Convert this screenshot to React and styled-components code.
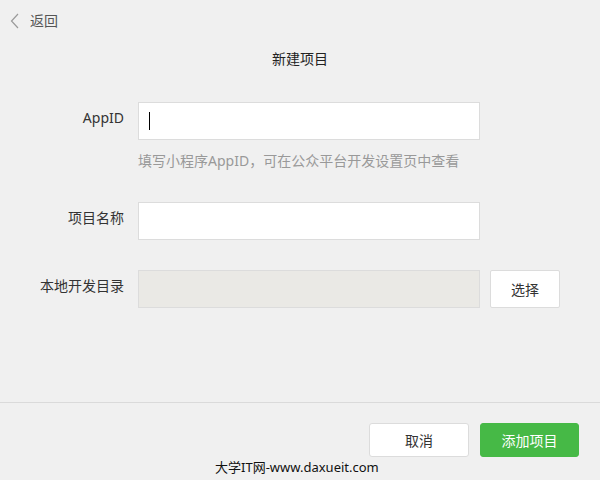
import styled, {createGlobalStyle} from "styled-components";

const GlobalStyle = createGlobalStyle`
  html, body {
    margin: 0;
    padding: 0;
    background: #f0f0f0;
  }
  body {
    font-family: "Noto Sans", "Noto Sans CJK SC", sans-serif;
    font-size: 14px;
    color: #333;
  }
`

const Page = styled.div`
  width: 600px;
  height: 480px;
  display: flex;
  flex-direction: column;
  background: #f0f0f0;
  overflow: hidden;
`

const Back = styled.a`
  display: flex;
  align-items: center;
  gap: 10px;
  margin: 12px 0 0 10px;
  height: 18px;
  line-height: 18px;
  color: #555;
  cursor: pointer;
  width: fit-content;
`

const Title = styled.h1`
  margin: 20px 0 0;
  font-size: 14px;
  font-weight: normal;
  line-height: 18px;
  text-align: center;
  color: #222;
`

const Form = styled.div`
  flex: 1;
  display: grid;
  grid-template-columns: 124px 342px 70px;
  column-gap: 14px;
  align-content: start;
  margin-top: 34px;
`

const Label = styled.label`
  grid-column: 1;
  text-align: right;
  font-size: 14px;
  line-height: 18px;
  padding-top: 7px;
  margin-top: ${p => p.$top || 0}px;
  color: #333;
  white-space: nowrap;
`

const Field = styled.div`
  grid-column: 2;
  height: 38px;
  box-sizing: border-box;
  border: 1px solid #dcdcdc;
  background: ${p => (p.$disabled ? "#eae9e5" : "#fff")};
  display: flex;
  align-items: center;
  padding-left: 10px;
  margin-top: ${p => p.$top || 0}px;
`

const Caret = styled.span`
  width: 1px;
  height: 18px;
  background: #000;
`

const Hint = styled.div`
  grid-column: 2 / 4;
  margin-top: 12px;
  line-height: 18px;
  color: #999;
  white-space: nowrap;
`

const Row = styled.div`
  display: contents;
`

const Pick = styled.button`
  grid-column: 3;
  margin: ${p => p.$top || 0}px 0 0 -4px;
  height: 38px;
  width: 70px;
  box-sizing: border-box;
  background: #fff;
  border: 1px solid #dcdcdc;
  border-radius: 2px;
  font-family: inherit;
  font-size: 14px;
  color: #333;
`

const Footer = styled.div`
  height: 78px;
  border-top: 1px solid #dadada;
  box-sizing: border-box;
  display: flex;
  flex-direction: column;
`

const Actions = styled.div`
  display: flex;
  justify-content: flex-end;
  gap: 11px;
  padding: 20px 21px 0 0;
`

const Button = styled.button`
  width: ${p => (p.$primary ? 99 : 100)}px;
  height: 34px;
  box-sizing: border-box;
  border-radius: 3px;
  font-family: inherit;
  font-size: 14px;
  border: 1px solid ${p => (p.$primary ? "#46b946" : "#dcdcdc")};
  background: ${p => (p.$primary ? "#46b946" : "#fff")};
  color: ${p => (p.$primary ? "#fff" : "#333")};
  cursor: pointer;
`

const Watermark = styled.div`
  margin: 1px 0 0 215px;
  font-size: 13px;
  line-height: 18px;
  color: #111;
  white-space: nowrap;
`

function Chevron() {
    return (
        <svg width="10" height="16" viewBox="0 0 10 16" fill="none">
            <path d="M8 1 L1.5 8 L8 15" stroke="#9a9a9a" strokeWidth="1.2"/>
        </svg>
    )
}

export default function App() {
    return (
        <Page>
            <GlobalStyle/>
            <Back><Chevron/>返回</Back>
            <Title>新建项目</Title>
            <Form>
                <Row>
                    <Label>AppID</Label>
                    <Field><Caret/></Field>
                </Row>
                <Hint>填写小程序AppID，可在公众平台开发设置页中查看</Hint>
                <Row>
                    <Label $top={32}>项目名称</Label>
                    <Field $top={32}/>
                </Row>
                <Row>
                    <Label $top={30}>本地开发目录</Label>
                    <Field $top={30} $disabled/>
                    <Pick $top={30}>选择</Pick>
                </Row>
            </Form>
            <Footer>
                <Actions>
                    <Button>取消</Button>
                    <Button $primary>添加项目</Button>
                </Actions>
                <Watermark>大学IT网-www.daxueit.com</Watermark>
            </Footer>
        </Page>
    )
}
